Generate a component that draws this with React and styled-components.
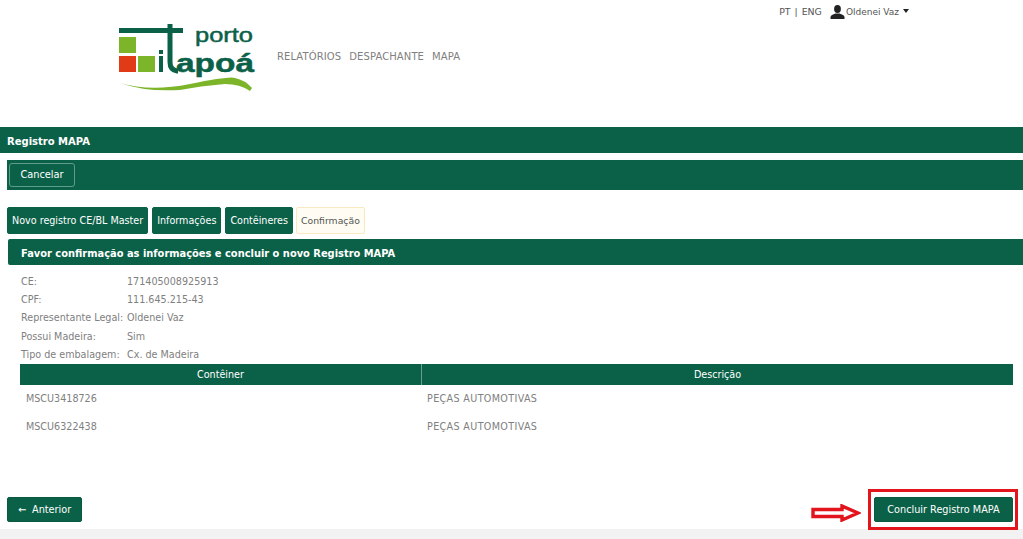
import React from "react"
import styled, { createGlobalStyle } from "styled-components"

const GREEN = "#0b6148"

const GlobalStyle = createGlobalStyle`
    html, body {
        margin: 0;
        padding: 0;
        background: #fff;
    }
    body {
        font-family: "DejaVu Sans", Verdana, sans-serif;
        font-size: 9.6px;
        color: #6f6f6f;
    }
`

const Page = styled.div`
    position: relative;
    width: 1023px;
    height: 539px;
    overflow: hidden;
    display: flex;
    flex-direction: column;
`

const Header = styled.header`
    height: 127px;
    flex: none;
    display: flex;
    align-items: flex-start;
    padding-left: 117px;
    box-sizing: border-box;
`

const LogoBox = styled.div`
    margin-top: 22px;
    width: 140px;
    height: 72px;
    flex: none;
`

const MainNav = styled.nav`
    display: flex;
    gap: 8px;
    margin: 50px 0 0 20px;
    font-size: 10px;
    line-height: 14px;
    letter-spacing: 0.1px;
    color: #808080;
`

const UserArea = styled.div`
    display: flex;
    align-items: center;
    margin: 4px 0 0 319px;
    height: 15px;
    font-size: 9.4px;
    color: #555;
`

const Sep = styled.span`
    margin: 0 4px;
`

const UserName = styled.span`
    margin-left: 1px;
    font-size: 9px;
`

const Caret = styled.span`
    width: 0;
    height: 0;
    margin: 0 0 2px 4px;
    border-left: 3.5px solid transparent;
    border-right: 3.5px solid transparent;
    border-top: 4px solid #222;
`

const TitleBar = styled.div`
    height: 26px;
    flex: none;
    display: flex;
    align-items: center;
    box-sizing: border-box;
    padding: 2px 0 0 7px;
    background: ${GREEN};
    color: #fff;
    font-size: 10px;
    font-weight: bold;
`

const Toolbar = styled.div`
    height: 30px;
    flex: none;
    display: flex;
    align-items: center;
    margin: 7px 0 0 7px;
    padding-left: 2px;
    background: ${GREEN};
`

const OutlineButton = styled.button`
    height: 24px;
    width: 66px;
    padding: 0 0 2px;
    border: 1px solid #5f9c89;
    border-radius: 3px;
    background: ${GREEN};
    color: #fff;
    font: inherit;
    font-size: 9.8px;
`

const Tabs = styled.div`
    display: flex;
    gap: 4px;
    flex: none;
    margin: 17px 0 0 7px;
`

const Tab = styled.div`
    height: 27px;
    box-sizing: border-box;
    display: flex;
    align-items: center;
    padding: 0 4px;
    border-radius: 2px;
    font-size: ${p => (p.$active ? "9.3px" : "9.6px")};
    margin-left: ${p => (p.$active ? "-1px" : "0")};
    background: ${p => (p.$active ? "#fffdf3" : GREEN)};
    color: ${p => (p.$active ? "#555" : "#fff")};
    border: 1px solid ${p => (p.$active ? "#f8e9c0" : GREEN)};
`

const SectionHead = styled.div`
    height: 26px;
    flex: none;
    display: flex;
    align-items: center;
    box-sizing: border-box;
    margin: 5px 0 0 8px;
    padding: 2px 0 0 13px;
    border-radius: 2px 0 0 2px;
    background: ${GREEN};
    color: #fff;
    font-size: 9.9px;
    font-weight: bold;
`

const Details = styled.dl`
    display: grid;
    grid-template-columns: 106px 1fr;
    grid-auto-rows: 18.4px;
    align-items: center;
    margin: 7px 0 0 21px;
    font-size: 9.6px;
    color: #808080;
    flex: none;
    dt, dd {
        margin: 0;
        white-space: nowrap;
    }
`

const Containers = styled.div`
    margin: 0 10px 0 20px;
    flex: none;
`

const HeadRow = styled.div`
    display: grid;
    grid-template-columns: 401px 1fr;
    height: 21px;
    background: ${GREEN};
    color: #fff;
    font-size: 9.6px;
`

const HeadCell = styled.div`
    display: flex;
    align-items: center;
    justify-content: center;
    & + & {
        border-left: 1px solid #6c9e8f;
    }
`

const BodyRow = styled.div`
    display: grid;
    grid-template-columns: 401px 1fr;
    height: 28px;
    align-items: center;
    color: #808080;
    font-size: 9.6px;
`

const BodyCell = styled.div`
    padding-left: 6px;
    & + & {
        letter-spacing: 0.35px;
    }
`

const Actions = styled.div`
    flex: 1;
    display: flex;
    justify-content: space-between;
    align-items: flex-start;
    padding: 56px 10px 0 7px;
`

const SolidButton = styled.button`
    height: 25px;
    width: ${p => p.$width}px;
    padding: 0;
    border: 1px solid #0a5a42;
    border-radius: 2px;
    background: ${GREEN};
    color: #fff;
    font: inherit;
    font-size: 9.7px;
`

const ArrowGlyph = styled.span`
    margin-right: 6px;
`

const Footer = styled.div`
    height: 10px;
    flex: none;
    background: #f2f2f2;
`

const Highlight = styled.div`
    position: absolute;
    left: 868px;
    top: 489px;
    width: 150px;
    height: 41px;
    box-sizing: border-box;
    border: 3px solid #e2141c;
`

const PointerArrow = styled.svg`
    position: absolute;
    left: 811px;
    top: 504px;
`

const Logo = () => (
    <svg width="140" height="72" viewBox="117 22 140 72">
        <rect x="119" y="28" width="64" height="5" fill="#0b6148" />
        <rect x="119" y="37" width="17" height="16" fill="#7cb52a" />
        <rect x="119" y="56" width="17" height="16" fill="#e03a17" />
        <rect x="138" y="56" width="17" height="16" fill="#7cb52a" />
        <rect x="159" y="50" width="4" height="4" fill="#0b6148" />
        <rect x="159" y="56" width="4" height="16" fill="#0b6148" />
        <path d="M170 24v38q0 8 7 9h1" fill="none" stroke="#0b6148" strokeWidth="5" />
        <path d="M120 83Q150 92 190 84T235 78Q245 80 252 88L250 91Q240 84 225 84Q200 86 180 90Q145 92 120 83Z" fill="#7cb52a" />
        <text x="195" y="42" fontFamily="'Liberation Sans', sans-serif" fontSize="21" stroke="#0b6148" strokeWidth="0.5" textLength="58" lengthAdjust="spacingAndGlyphs" fill="#0b6148">porto</text>
        <text x="176" y="72" fontFamily="'Liberation Sans', sans-serif" fontSize="26" fontWeight="bold" stroke="#0b6148" strokeWidth="0.5" textLength="78" lengthAdjust="spacingAndGlyphs" fill="#0b6148">apoá</text>
    </svg>
)

const UserIcon = () => (
    <svg width="15" height="14" viewBox="0 0 15 14">
        <ellipse cx="7.5" cy="4" rx="3.4" ry="4" fill="#222" />
        <path d="M0.5 14v-2q0-1.5 2-2.2l3-1.2h4l3 1.2q2 .7 2 2.2v2z" fill="#222" />
    </svg>
)

const details = [
    ["CE:", "171405008925913"],
    ["CPF:", "111.645.215-43"],
    ["Representante Legal:", "Oldenei Vaz"],
    ["Possui Madeira:", "Sim"],
    ["Tipo de embalagem:", "Cx. de Madeira"],
]

const containers = [
    ["MSCU3418726", "PEÇAS AUTOMOTIVAS"],
    ["MSCU6322438", "PEÇAS AUTOMOTIVAS"],
]

const App = () => {
    return (
        <Page>
            <GlobalStyle />
            <Header>
                <LogoBox><Logo /></LogoBox>
                <MainNav>
                    <span>RELATÓRIOS</span>
                    <span>DESPACHANTE</span>
                    <span>MAPA</span>
                </MainNav>
                <UserArea>
                    PT<Sep>|</Sep>ENG
                    <Sep />
                    <UserIcon />
                    <UserName>Oldenei Vaz</UserName>
                    <Caret />
                </UserArea>
            </Header>
            <TitleBar>Registro MAPA</TitleBar>
            <Toolbar><OutlineButton>Cancelar</OutlineButton></Toolbar>
            <Tabs>
                <Tab>Novo registro CE/BL Master</Tab>
                <Tab>Informações</Tab>
                <Tab>Contêineres</Tab>
                <Tab $active>Confirmação</Tab>
            </Tabs>
            <SectionHead>Favor confirmação as informações e concluir o novo Registro MAPA</SectionHead>
            <Details>
                {details.map(([label, value]) => (
                    <React.Fragment key={label}>
                        <dt>{label}</dt>
                        <dd>{value}</dd>
                    </React.Fragment>
                ))}
            </Details>
            <Containers>
                <HeadRow>
                    <HeadCell>Contêiner</HeadCell>
                    <HeadCell>Descrição</HeadCell>
                </HeadRow>
                {containers.map(([code, desc]) => (
                    <BodyRow key={code}>
                        <BodyCell>{code}</BodyCell>
                        <BodyCell>{desc}</BodyCell>
                    </BodyRow>
                ))}
            </Containers>
            <Actions>
                <SolidButton $width={75}><ArrowGlyph>←</ArrowGlyph>Anterior</SolidButton>
                <SolidButton $width={139}>Concluir Registro MAPA</SolidButton>
            </Actions>
            <Footer />
            <Highlight />
            <PointerArrow width="50" height="18" viewBox="0 0 50 18">
                <path d="M2 5.5h29V2l16 7-16 7v-3.5H2z" fill="#fff" stroke="#e2141c" strokeWidth="3.4" />
            </PointerArrow>
        </Page>
    )
}

export default App
